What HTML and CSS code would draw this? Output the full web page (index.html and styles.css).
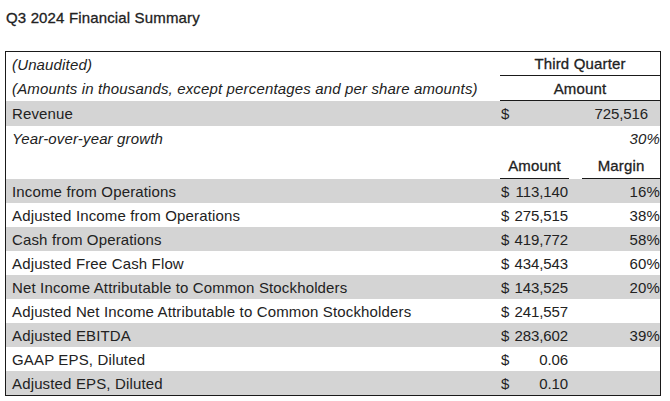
FILE: index.html
```html
<!DOCTYPE html>
<html>
<head>
<meta charset="utf-8">
<link rel="stylesheet" href="styles.css">
</head>
<body>
<div class="page">
  <h1 class="title">Q3 2024 Financial Summary</h1>
  <table class="fin">
    <colgroup>
      <col class="c-label">
      <col class="c-amt">
      <col class="c-gap">
      <col class="c-mar">
    </colgroup>
    <tr class="r-h1">
      <td class="it">(Unaudited)</td>
      <td class="hd ul" colspan="3">Third Quarter</td>
    </tr>
    <tr class="r-h2">
      <td class="it">(Amounts in thousands, except percentages and per share amounts)</td>
      <td class="hd ul" colspan="3">Amount</td>
    </tr>
    <tr class="r-rev gray">
      <td>Revenue</td>
      <td class="amt" colspan="3"><span class="cur">$</span><span class="num rev">725,516</span></td>
    </tr>
    <tr class="r-yoy">
      <td class="it">Year-over-year growth</td>
      <td></td><td></td>
      <td class="mar it">30%</td>
    </tr>
    <tr class="r-h3">
      <td></td>
      <td class="hd ul">Amount</td>
      <td></td>
      <td class="hd ul">Margin</td>
    </tr>
    <tr class="gray">
      <td>Income from Operations</td>
      <td class="amt"><span class="cur">$</span><span class="num">113,140</span></td>
      <td></td>
      <td class="mar">16%</td>
    </tr>
    <tr>
      <td>Adjusted Income from Operations</td>
      <td class="amt"><span class="cur">$</span><span class="num">275,515</span></td>
      <td></td>
      <td class="mar">38%</td>
    </tr>
    <tr class="gray">
      <td>Cash from Operations</td>
      <td class="amt"><span class="cur">$</span><span class="num">419,772</span></td>
      <td></td>
      <td class="mar">58%</td>
    </tr>
    <tr>
      <td>Adjusted Free Cash Flow</td>
      <td class="amt"><span class="cur">$</span><span class="num">434,543</span></td>
      <td></td>
      <td class="mar">60%</td>
    </tr>
    <tr class="gray">
      <td>Net Income Attributable to Common Stockholders</td>
      <td class="amt"><span class="cur">$</span><span class="num">143,525</span></td>
      <td></td>
      <td class="mar">20%</td>
    </tr>
    <tr>
      <td>Adjusted Net Income Attributable to Common Stockholders</td>
      <td class="amt"><span class="cur">$</span><span class="num">241,557</span></td>
      <td></td>
      <td class="mar"></td>
    </tr>
    <tr class="gray">
      <td>Adjusted EBITDA</td>
      <td class="amt"><span class="cur">$</span><span class="num">283,602</span></td>
      <td></td>
      <td class="mar">39%</td>
    </tr>
    <tr>
      <td>GAAP EPS, Diluted</td>
      <td class="amt"><span class="cur">$</span><span class="num">0.06</span></td>
      <td></td>
      <td class="mar"></td>
    </tr>
    <tr class="gray">
      <td>Adjusted EPS, Diluted</td>
      <td class="amt"><span class="cur">$</span><span class="num">0.10</span></td>
      <td></td>
      <td class="mar"></td>
    </tr>
  </table>
</div>
</body>
</html>
```

FILE: styles.css
```css
html, body {
  margin: 0;
  padding: 0;
  background: #ffffff;
}

body {
  font-family: "Liberation Sans", Arial, sans-serif;
  color: #222222;
}

.page {
  padding: 9px 0 0 5px;
}

.title {
  margin: 0 0 0 1px;
  font-size: 15px;
  font-weight: normal;
  letter-spacing: 0.15px;
  -webkit-text-stroke: 0.3px #222222;
  line-height: 18px;
  height: 42px;
}

.fin {
  width: 656px;
  table-layout: fixed;
  border-collapse: separate;
  border-spacing: 0;
  border: 1px solid #1a1a1a;
  font-size: 15px;
  letter-spacing: 0.15px;
  line-height: 17px;
}

.c-label { width: 494px; }
.c-amt { width: 69px; }
.c-gap { width: 13px; }
.c-mar { width: 78px; }

.fin td {
  padding: 0;
  white-space: nowrap;
  vertical-align: middle;
}

.fin td:first-child {
  padding-left: 6px;
}

.fin tr { height: 24px; }
.fin tr.r-h1 { height: 24px; }
.fin tr.r-h2 { height: 25px; }
.fin tr.r-rev { height: 25px; }
.fin tr.r-yoy { height: 24px; }
.fin tr.r-h3 { height: 29px; }

.gray td { background: #d4d4d4; }

.it { font-style: italic; }

.hd {
  text-align: center;
  -webkit-text-stroke: 0.3px #222222;
}

.ul { border-bottom: 1px solid #1a1a1a; }

.r-h3 .hd { vertical-align: bottom; padding-bottom: 4px; }

.amt { letter-spacing: 0; }
.amt .cur { float: left; padding-left: 1px; }
.amt .num { float: right; padding-right: 1px; letter-spacing: -0.1px; }
.amt .num.rev { padding-right: 12px; }

.mar {
  text-align: right;
  padding-right: 0;
}
```
